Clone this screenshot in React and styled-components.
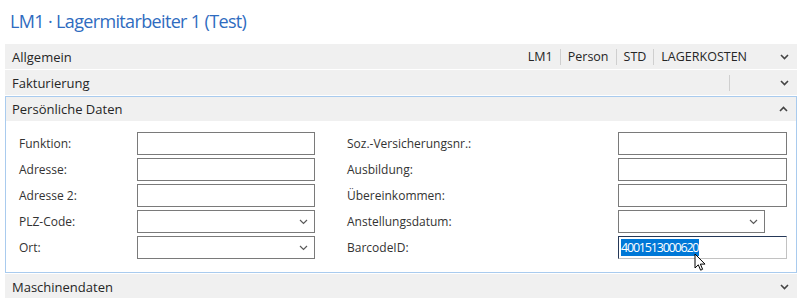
import React from "react";
import styled, { createGlobalStyle } from "styled-components";

const Global = createGlobalStyle`
  html, body { margin: 0; padding: 0; background: #fff; }
  body { font-family: "Open Sans", "Noto Sans", sans-serif; color: #262626; }
  * { box-sizing: border-box; }
`;

const Page = styled.div`
  width: 802px;
  height: 298px;
  padding: 0 5px;
  overflow: hidden;
  position: relative;
`;

const Title = styled.h1`
  margin: 0;
  height: 44px;
  padding: 9px 0 0 5px;
  font-size: 18px;
  font-weight: 400;
  color: #2f6cc0;
  line-height: 24px;
  letter-spacing: -0.65px;
`;

const Tab = styled.section`
  margin-bottom: 1px;
  border: ${(p) => (p.$open ? "1px solid #a9cbee" : "none")};
`;

const TabHeader = styled.div`
  display: flex;
  align-items: center;
  height: ${(p) => (p.$open ? "24px" : "25px")};
  background: #f0f0f0;
  padding-left: ${(p) => (p.$open ? "6px" : "7px")};
  font-size: 13px;
  color: #262626;
`;

const TabTitle = styled.span`
  flex: 1;
`;

const Summary = styled.div`
  display: flex;
  align-items: center;
  font-size: 12.5px;
`;

const SummaryItem = styled.span`
  padding: 0 7px;
`;

const Sep = styled.span`
  width: 1px;
  height: 16px;
  background: #cfcfcf;
  margin-right: ${(p) => p.$mr || 0}px;
`;

const ChevronBox = styled.span`
  width: 28px;
  display: flex;
  justify-content: flex-start;
  padding-left: 11px;
  margin-left: ${(p) => p.$ml || 0}px;
`;

const Body = styled.div`
  display: grid;
  grid-template-columns: 118px 178px 32px 271px 169px;
  grid-auto-rows: 23px;
  row-gap: 3px;
  padding: 11px 9px 13px 13px;
  align-items: center;
`;

const Label = styled.label`
  font-size: 12px;
  color: #333;
  grid-column: ${(p) => p.$col};
`;

const Field = styled.div`
  grid-column: ${(p) => p.$col};
  height: 23px;
  width: ${(p) => p.$w || "100%"};
  border: 1px solid #7a7a7a;
  display: flex;
  align-items: center;
  justify-content: flex-end;
  padding: 0 6px 0 2px;
  background: #fff;
`;

const FocusField = styled(Field)`
  justify-content: flex-start;
  border-color: #253858 #c2c2c2 #c2c2c2 #253858;
  position: relative;
`;

const Selected = styled.span`
  background: #0078d7;
  color: #fff;
  font-size: 12.5px;
  line-height: 17px;
  padding: 0 1px 0 0;
  letter-spacing: -1.2px;
`;

const Cursor = styled.svg`
  position: absolute;
  left: 75px;
  top: 16px;
`;

const Chevron = ({ up }) => (
  <svg width="9" height="6" viewBox="0 0 9 6">
    <polyline
      points={up ? "1,5 4.5,1.5 8,5" : "1,1 4.5,4.5 8,1"}
      fill="none"
      stroke="#444"
      strokeWidth="1.6"
    />
  </svg>
);

const ThinChevron = () => (
  <svg width="9" height="6" viewBox="0 0 9 6">
    <polyline points="1,1 4.5,4.5 8,1" fill="none" stroke="#5a5a5a" strokeWidth="1.2" />
  </svg>
);

const rows = [
  ["Funktion:", false, "Soz.-Versicherungsnr.:", "input"],
  ["Adresse:", false, "Ausbildung:", "input"],
  ["Adresse 2:", false, "Übereinkommen:", "input"],
  ["PLZ-Code:", true, "Anstellungsdatum:", "date"],
  ["Ort:", true, "BarcodeID:", "focus"],
];

export default function App() {
  return (
    <>
      <Global />
      <Page>
        <Title>LM1 · Lagermitarbeiter 1 (Test)</Title>
        <Tab>
          <TabHeader>
            <TabTitle>Allgemein</TabTitle>
            <Summary>
              <SummaryItem>LM1</SummaryItem>
              <Sep />
              <SummaryItem>Person</SummaryItem>
              <Sep />
              <SummaryItem>STD</SummaryItem>
              <Sep />
              <SummaryItem>LAGERKOSTEN</SummaryItem>
            </Summary>
            <ChevronBox $ml={15}>
              <Chevron />
            </ChevronBox>
          </TabHeader>
        </Tab>
        <Tab>
          <TabHeader>
            <TabTitle>Fakturierung</TabTitle>
            <Sep $mr={39} />
            <ChevronBox>
              <Chevron />
            </ChevronBox>
          </TabHeader>
        </Tab>
        <Tab $open>
          <TabHeader $open>
            <TabTitle>Persönliche Daten</TabTitle>
            <ChevronBox>
              <Chevron up />
            </ChevronBox>
          </TabHeader>
          <Body>
            {rows.map(([l, sel, r, kind]) => (
              <React.Fragment key={l}>
                <Label $col={1}>{l}</Label>
                <Field $col={2}>{sel && <ThinChevron />}</Field>
                <Label $col={4}>{r}</Label>
                {kind === "input" && <Field $col={5} />}
                {kind === "date" && (
                  <Field $col={5} $w="147px">
                    <ThinChevron />
                  </Field>
                )}
                {kind === "focus" && (
                  <FocusField $col={5}>
                    <Selected>4001513000620</Selected>
                    <Cursor width="12" height="19" viewBox="0 0 12 19">
                      <path
                        d="M1 1 L1 15 L4.3 11.8 L6.6 17.2 L8.6 16.3 L6.4 11.1 L11 11.1 Z"
                        fill="#fff"
                        stroke="#000"
                        strokeWidth="1"
                        strokeLinejoin="round"
                      />
                    </Cursor>
                  </FocusField>
                )}
              </React.Fragment>
            ))}
          </Body>
        </Tab>
        <Tab>
          <TabHeader>
            <TabTitle>Maschinendaten</TabTitle>
            <ChevronBox>
              <Chevron />
            </ChevronBox>
          </TabHeader>
        </Tab>
      </Page>
    </>
  );
}
